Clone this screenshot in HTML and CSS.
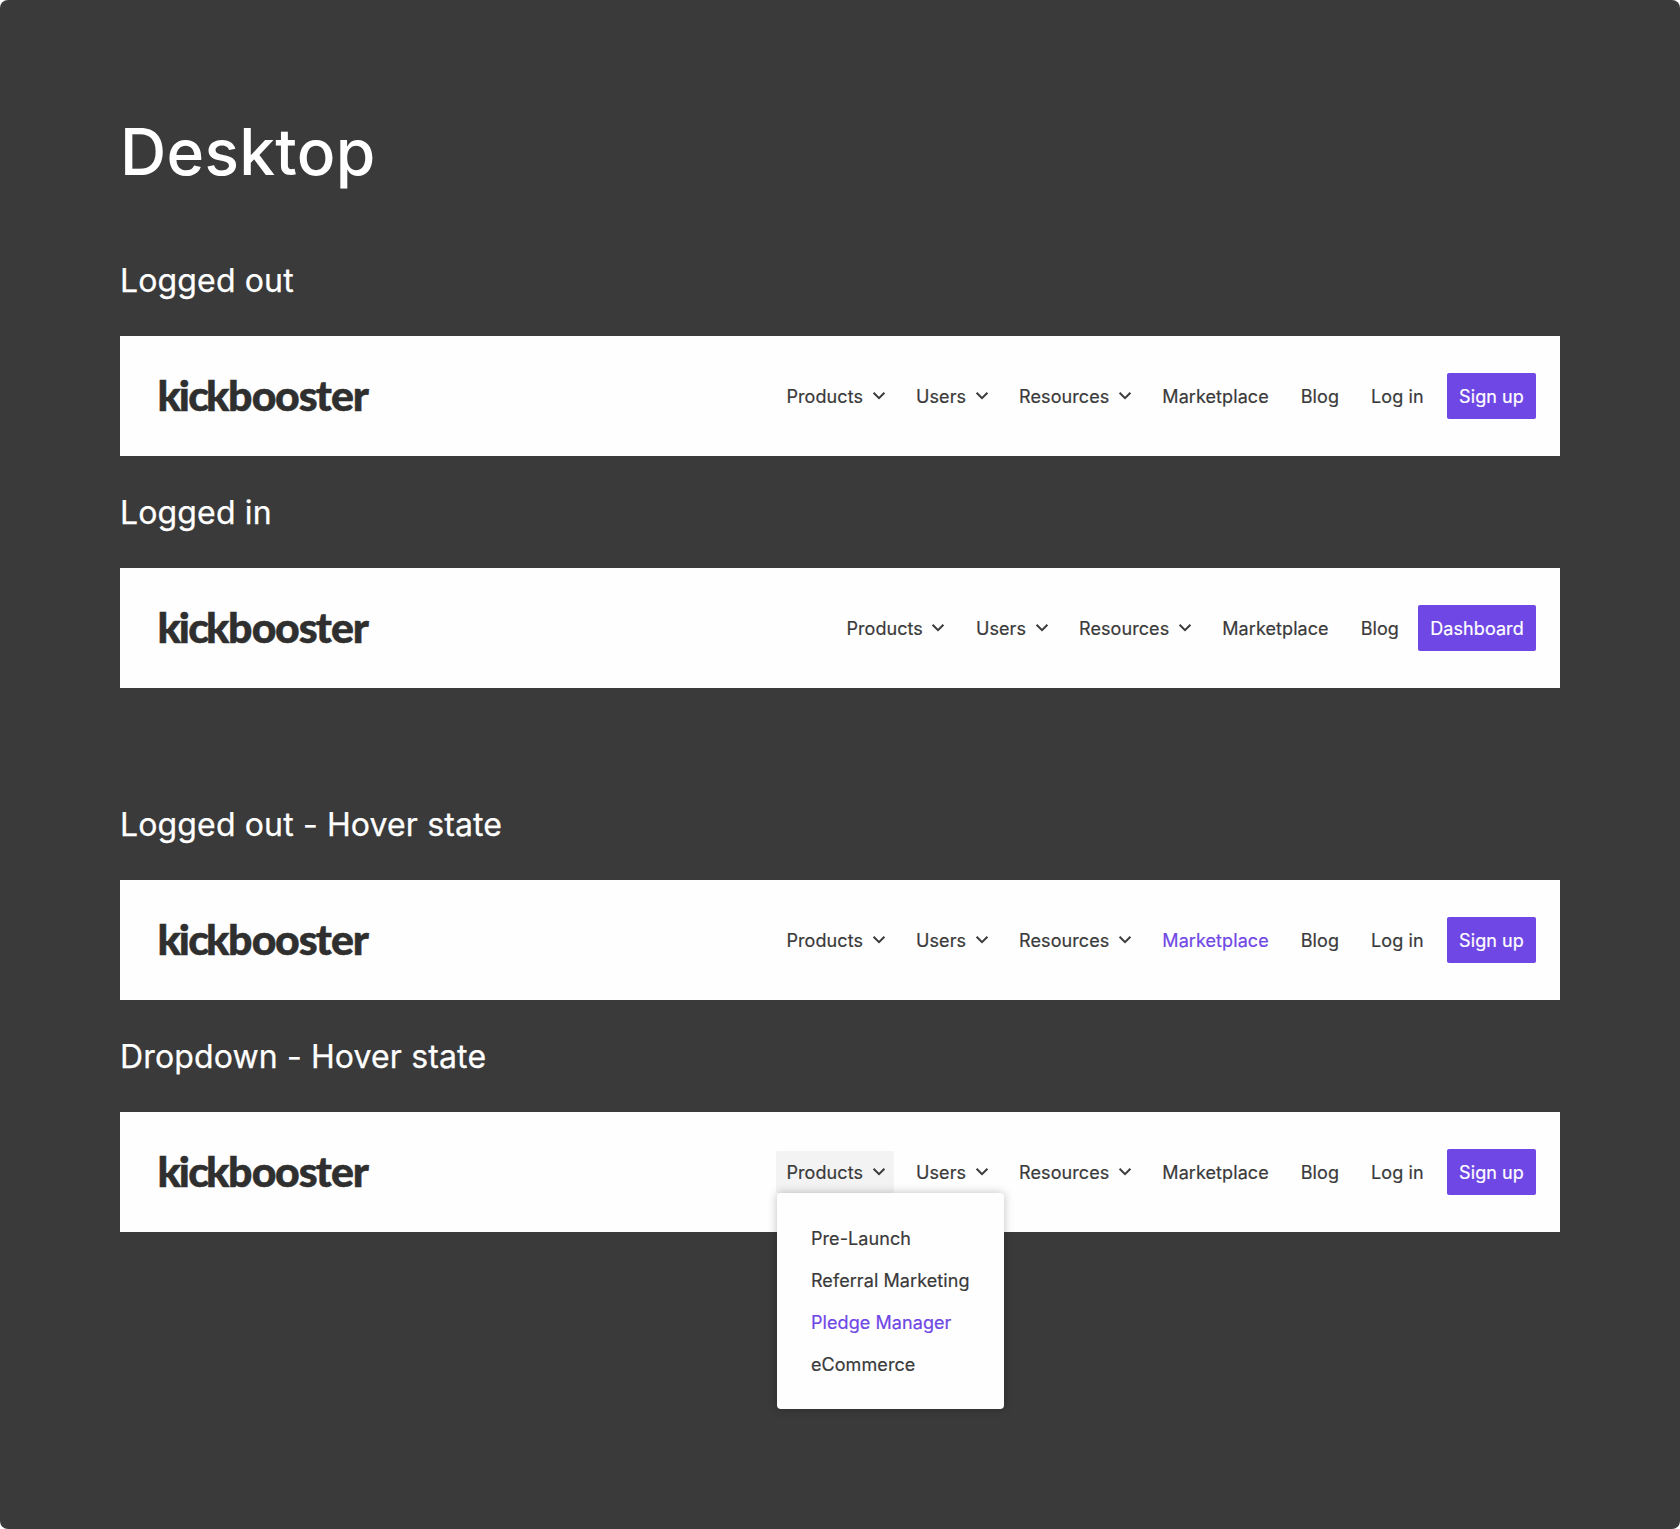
FILE: index.html
```html
<!DOCTYPE html>
<html lang="en">
<head>
<meta charset="utf-8">
<title>Kickbooster navigation</title>
<link rel="stylesheet" href="styles.css">
</head>
<body>
<svg class="sprite" aria-hidden="true">
  <symbol id="chevron" viewBox="0 0 14 10"><path d="M1.6 1.8 7 7.2l5.4-5.4" fill="none" stroke="currentColor" stroke-width="2"/></symbol>
</svg>
<main class="board">
  <h1 class="board-title">Desktop</h1>

  <section class="state">
    <h2 class="state-title">Logged out</h2>
    <header class="bar">
      <svg class="logo" viewBox="0 0 214 40"><text y="35" transform="scale(1.02 1)" x=".45 21.3 30.7 48 69.5 92.9 115.8 138.9 155.6 170.7 191.9">kickbooster</text></svg>
      <nav class="nav">
        <a class="item">Products<svg class="chevron"><use href="#chevron"/></svg></a>
        <a class="item">Users<svg class="chevron"><use href="#chevron"/></svg></a>
        <a class="item">Resources<svg class="chevron"><use href="#chevron"/></svg></a>
        <a class="item">Marketplace</a>
        <a class="item">Blog</a>
        <a class="item">Log in</a>
        <a class="button">Sign up</a>
      </nav>
    </header>
  </section>

  <section class="state state-last">
    <h2 class="state-title">Logged in</h2>
    <header class="bar">
      <svg class="logo" viewBox="0 0 214 40"><text y="35" transform="scale(1.02 1)" x=".45 21.3 30.7 48 69.5 92.9 115.8 138.9 155.6 170.7 191.9">kickbooster</text></svg>
      <nav class="nav">
        <a class="item">Products<svg class="chevron"><use href="#chevron"/></svg></a>
        <a class="item">Users<svg class="chevron"><use href="#chevron"/></svg></a>
        <a class="item">Resources<svg class="chevron"><use href="#chevron"/></svg></a>
        <a class="item">Marketplace</a>
        <a class="item">Blog</a>
        <a class="button button-dashboard">Dashboard</a>
      </nav>
    </header>
  </section>

  <section class="state">
    <h2 class="state-title">Logged out - Hover state</h2>
    <header class="bar">
      <svg class="logo" viewBox="0 0 214 40"><text y="35" transform="scale(1.02 1)" x=".45 21.3 30.7 48 69.5 92.9 115.8 138.9 155.6 170.7 191.9">kickbooster</text></svg>
      <nav class="nav">
        <a class="item">Products<svg class="chevron"><use href="#chevron"/></svg></a>
        <a class="item">Users<svg class="chevron"><use href="#chevron"/></svg></a>
        <a class="item">Resources<svg class="chevron"><use href="#chevron"/></svg></a>
        <a class="item hovered">Marketplace</a>
        <a class="item">Blog</a>
        <a class="item">Log in</a>
        <a class="button">Sign up</a>
      </nav>
    </header>
  </section>

  <section class="state">
    <h2 class="state-title">Dropdown - Hover state</h2>
    <header class="bar">
      <svg class="logo" viewBox="0 0 214 40"><text y="35" transform="scale(1.02 1)" x=".45 21.3 30.7 48 69.5 92.9 115.8 138.9 155.6 170.7 191.9">kickbooster</text></svg>
      <nav class="nav">
        <div class="dropdown">
          <a class="item open">Products<svg class="chevron"><use href="#chevron"/></svg></a>
          <div class="menu">
            <a class="menu-item">Pre-Launch</a>
            <a class="menu-item">Referral Marketing</a>
            <a class="menu-item hovered">Pledge Manager</a>
            <a class="menu-item">eCommerce</a>
          </div>
        </div>
        <a class="item">Users<svg class="chevron"><use href="#chevron"/></svg></a>
        <a class="item">Resources<svg class="chevron"><use href="#chevron"/></svg></a>
        <a class="item">Marketplace</a>
        <a class="item">Blog</a>
        <a class="item">Log in</a>
        <a class="button">Sign up</a>
      </nav>
    </header>
  </section>
</main>
</body>
</html>
```

FILE: styles.css
```css
* { box-sizing: border-box; }
body { margin: 0; background: #fff; font-family: Inter, "Liberation Sans", sans-serif; }
.sprite { display: none; }
.board {
  height: 1529px;
  padding: 112px 120px 0;
  background: #3a3a3a;
  border-radius: 8px;
  color: #fff;
}
.board-title { margin: 0 0 32px; font-size: 64px; font-weight: 500; letter-spacing: .3px; line-height: 80px; }
.state-title {
  margin: 0;
  height: 112px;
  padding-top: 37px;
  font-size: 32px;
  font-weight: 400;
  letter-spacing: .14px;
  line-height: 40px;
  -webkit-text-stroke: .25px;
}
.state-last { margin-bottom: 80px; }
.bar {
  display: flex;
  align-items: center;
  justify-content: space-between;
  height: 120px;
  padding: 0 24px 0 37px;
  background: #fefefe;
  color: #3a3a3a;
}
.logo {
  width: 214px;
  height: 40px;
  overflow: visible;
  font-family: Lato, sans-serif;
  font-size: 42px;
  font-weight: 900;
  fill: #2f2f2f;
  stroke: #2f2f2f;
  stroke-width: .5px;
}
.nav {
  display: flex;
  align-items: center;
  gap: 12px;
  font-size: 18px;
  font-weight: 400;
  letter-spacing: .08px;
  -webkit-text-stroke: .2px;
}
.item { display: flex; align-items: center; height: 42px; padding: 0 10px; white-space: nowrap; }
.chevron { width: 14px; height: 10px; margin: 0 -1.5px 0 8.5px; }
.hovered { color: #6f47e5; }
.button {
  display: flex;
  align-items: center;
  justify-content: center;
  width: 89px;
  height: 46px;
  margin-left: 1.4px;
  border-radius: 2px;
  background: #6f47e5;
  color: #fff;
}
.button-dashboard { width: 118px; margin-left: -3px; }
.dropdown { position: relative; }
.open { background: #f3f3f3; border-radius: 2px; }
.menu {
  position: absolute;
  top: 42px;
  left: .5px;
  width: 227px;
  padding: 24px 34px;
  border-radius: 4px;
  background: #fefefe;
  box-shadow: 0 0 10px rgba(0, 0, 0, .25);
}
.menu-item { display: flex; align-items: center; height: 42px; white-space: nowrap; }
```
